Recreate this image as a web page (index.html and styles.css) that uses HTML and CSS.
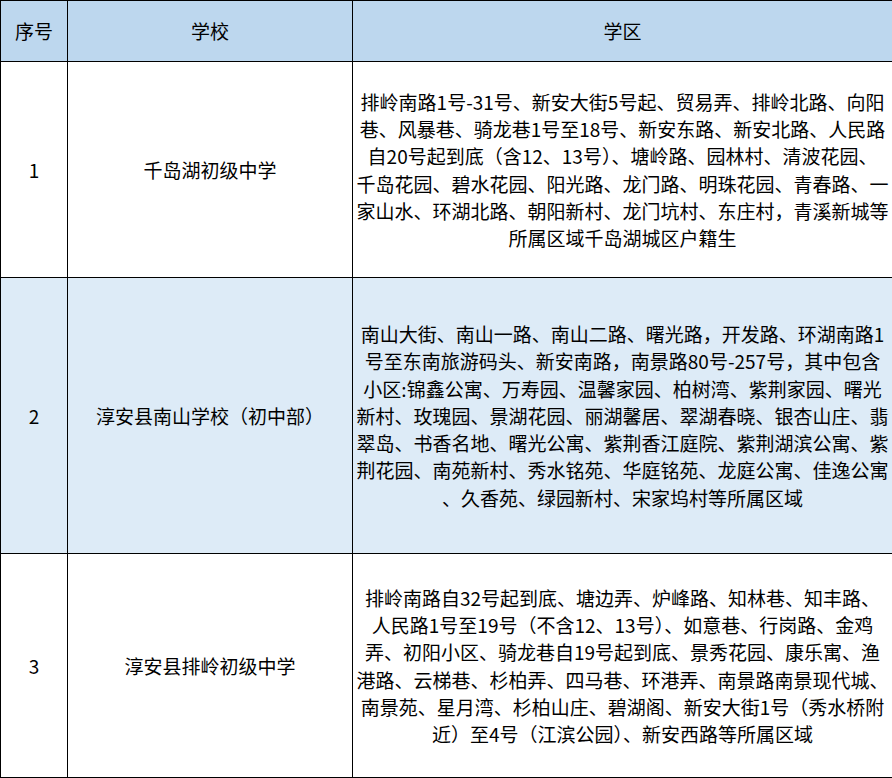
FILE: index.html
```html
<!DOCTYPE html>
<html lang="zh-CN">
<head>
<meta charset="utf-8">
<title>学区划分</title>
<link rel="stylesheet" href="styles.css">
</head>
<body>
<table class="zone-table">
  <colgroup>
    <col class="col-no">
    <col class="col-school">
    <col class="col-zone">
  </colgroup>
  <thead>
    <tr class="head-row">
      <th>序号</th>
      <th>学校</th>
      <th>学区</th>
    </tr>
  </thead>
  <tbody>
    <tr class="row-1">
      <td>1</td>
      <td>千岛湖初级中学</td>
      <td class="zone">
        <span class="ln">排岭南路1号-31号、新安大街5号起、贸易弄、排岭北路、向阳</span>
        <span class="ln">巷、风暴巷、骑龙巷1号至18号、新安东路、新安北路、人民路</span>
        <span class="ln">自20号起到底（含12、13号）、塘岭路、园林村、清波花园、</span>
        <span class="ln">千岛花园、碧水花园、阳光路、龙门路、明珠花园、青春路、一</span>
        <span class="ln">家山水、环湖北路、朝阳新村、龙门坑村、东庄村，青溪新城等</span>
        <span class="ln">所属区域千岛湖城区户籍生</span>
      </td>
    </tr>
    <tr class="row-2 alt">
      <td>2</td>
      <td>淳安县南山学校（初中部）</td>
      <td class="zone">
        <span class="ln">南山大街、南山一路、南山二路、曙光路，开发路、环湖南路1</span>
        <span class="ln">号至东南旅游码头、新安南路，南景路80号-257号，其中包含</span>
        <span class="ln">小区:锦鑫公寓、万寿园、温馨家园、柏树湾、紫荆家园、曙光</span>
        <span class="ln">新村、玫瑰园、景湖花园、丽湖馨居、翠湖春晓、银杏山庄、翡</span>
        <span class="ln">翠岛、书香名地、曙光公寓、紫荆香江庭院、紫荆湖滨公寓、紫</span>
        <span class="ln">荆花园、南苑新村、秀水铭苑、华庭铭苑、龙庭公寓、佳逸公寓</span>
        <span class="ln">、久香苑、绿园新村、宋家坞村等所属区域</span>
      </td>
    </tr>
    <tr class="row-3">
      <td>3</td>
      <td>淳安县排岭初级中学</td>
      <td class="zone">
        <span class="ln">排岭南路自32号起到底、塘边弄、炉峰路、知林巷、知丰路、</span>
        <span class="ln">人民路1号至19号（不含12、13号）、如意巷、行岗路、金鸡</span>
        <span class="ln">弄、初阳小区、骑龙巷自19号起到底、景秀花园、康乐寓、渔</span>
        <span class="ln">港路、云梯巷、杉柏弄、四马巷、环港弄、南景路南景现代城、</span>
        <span class="ln">南景苑、星月湾、杉柏山庄、碧湖阁、新安大街1号（秀水桥附</span>
        <span class="ln">近）至4号（江滨公园）、新安西路等所属区域</span>
      </td>
    </tr>
  </tbody>
</table>
</body>
</html>
```

FILE: styles.css
```css
html, body {
  margin: 0;
  padding: 0;
  background: #ffffff;
}

body {
  font-family: "Noto Sans CJK SC", "Noto Sans", sans-serif;
  font-size: 19px;
  color: #000000;
}

.zone-table {
  border-collapse: collapse;
  table-layout: fixed;
  width: 892px;
}

.col-no { width: 67px; }
.col-school { width: 285px; }
.col-zone { width: 540px; }

.zone-table th,
.zone-table td {
  border: 1px solid #000000;
  padding: 0;
  text-align: center;
  vertical-align: middle;
  font-weight: normal;
  line-height: 27.2px;
}

.head-row th {
  background: #bdd7ee;
  height: 60px;
}

.row-1 td { height: 215px; }
.row-2 td { height: 275px; }
.row-3 td { height: 223px; }

.alt td {
  background: #ddebf7;
}

.ln {
  display: block;
  white-space: nowrap;
}
```
